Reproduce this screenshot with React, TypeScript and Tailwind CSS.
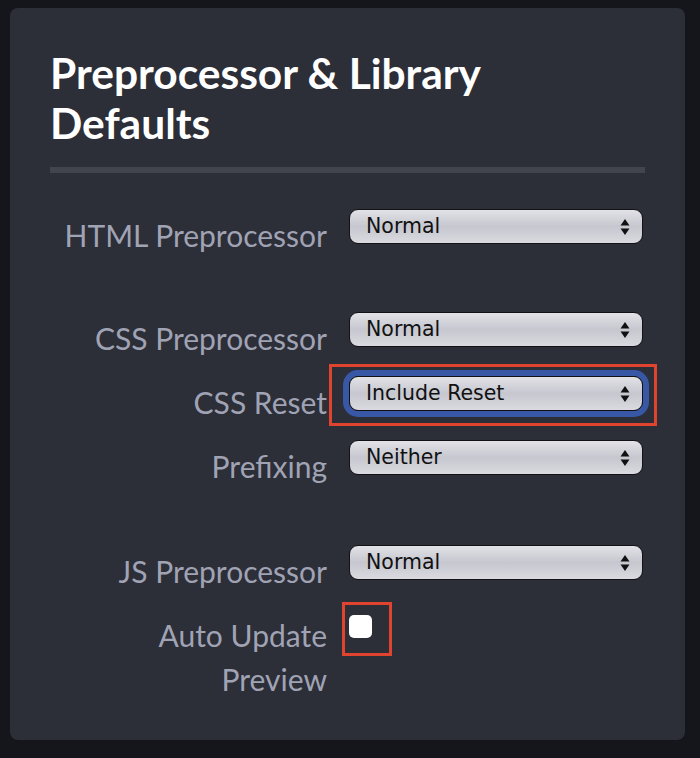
import React from "react";

const lato = "[font-family:Lato,'Open_Sans',sans-serif]";

function Arrows() {
  return (
    <svg width="10" height="18" viewBox="0 0 10 18" className="shrink-0">
      <path d="M5 1 L9.5 7.5 L0.5 7.5 Z" fill="#111" />
      <path d="M5 17 L9.5 10.5 L0.5 10.5 Z" fill="#111" />
    </svg>
  );
}

function FakeSelect({ value, focused }: { value: string; focused?: boolean }) {
  return (
    <div
      className={
        "-mt-[4px] flex h-[35px] w-[294px] items-center justify-between rounded-[9px] border-[1.5px] border-[#121216] bg-gradient-to-b from-[#e2e2e7] via-[#c6c7cf] to-[#dadae0] pl-4 pr-[12px] text-[20.5px] text-[#111] [font-family:'DejaVu_Sans',sans-serif] " +
        (focused ? "ring-[6px] ring-[#3858a6]" : "")
      }
    >
      <span className="leading-none">{value}</span>
      <Arrows />
    </div>
  );
}

function Row({ label, children }: { label: React.ReactNode; children: React.ReactNode }) {
  return (
    <div className="flex items-start gap-[22px]">
      <div className={"w-[277px] text-right text-[30px] leading-[44px] text-[#a0a3b4] " + lato}>
        {label}
      </div>
      {children}
    </div>
  );
}

export default function App() {
  return (
    <div className="min-h-[758px] bg-[#15161b] pt-2 pl-[10px]">
      <div className="h-[732px] w-[675px] rounded-lg bg-[#2c2e38] px-10 pt-[40px]">
        <h2 className={"text-[42.5px] font-bold leading-[50px] text-white " + lato}>
          Preprocessor &amp; Library
          <br />
          Defaults
        </h2>
        <div className="mt-[19px] h-[6px] w-[595px] bg-[#42444e]" />

        <div className="mt-[40px]">
          <Row label="HTML Preprocessor">
            <FakeSelect value="Normal" />
          </Row>
        </div>

        <div className="mt-[59px] flex flex-col gap-5">
          <Row label="CSS Preprocessor">
            <FakeSelect value="Normal" />
          </Row>
          <Row label="CSS Reset">
            <div className="relative">
              <FakeSelect value="Include Reset" focused />
              <div className="pointer-events-none absolute -left-5 -right-[14px] -top-[16px] bottom-[-15px] border-[3px] border-[#e0432e]" />
            </div>
          </Row>
          <Row label="Prefixing">
            <FakeSelect value="Neither" />
          </Row>
        </div>

        <div className="mt-[61px] flex flex-col gap-5">
          <Row label="JS Preprocessor">
            <FakeSelect value="Normal" />
          </Row>
          <Row
            label={
              <>
                Auto Update
                <br />
                Preview
              </>
            }
          >
            <div className="relative mt-[2px]">
              <div className="h-[23px] w-[23px] rounded-[5px] bg-white" />
              <div className="pointer-events-none absolute -left-[7px] -top-[13px] h-[54px] w-[50px] border-[3px] border-[#e0432e]" />
            </div>
          </Row>
        </div>
      </div>
    </div>
  );
}
